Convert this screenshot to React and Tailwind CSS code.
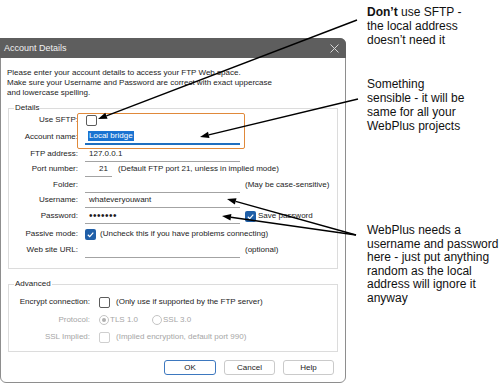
import React from "react";

const CheckBox = ({ checked, disabled }) => {
  if (checked) {
    return (
      <div className="w-[11px] h-[11px] rounded-[2px] bg-[#1f5fa8] flex items-center justify-center shrink-0">
        <svg width="9" height="9" viewBox="0 0 9 9">
          <polyline points="1.8,4.8 3.7,6.6 7.3,2.6" fill="none" stroke="#ffffff" strokeWidth="1.2" />
        </svg>
      </div>
    );
  }
  return (
    <div
      className={
        disabled
          ? "w-[11px] h-[11px] rounded-[2px] border border-[#cfcfcf] bg-white shrink-0"
          : "w-[11px] h-[11px] rounded-[2px] border border-[#5c5c5c] bg-white shrink-0"
      }
    />
  );
};

const Radio = ({ selected }) => (
  <div className="w-[10px] h-[10px] rounded-full border border-[#c4c4c4] bg-white flex items-center justify-center shrink-0">
    {selected && <div className="w-[4px] h-[4px] rounded-full bg-[#b0b0b0]" />}
  </div>
);

// baris pada grup Details
const Row = ({ label, className = "", children }) => (
  <div className={"flex h-[16px] items-center " + className}>
    <div className="w-[69px] text-right">{label}</div>
    <div className="ml-[7px] flex items-center">{children}</div>
  </div>
);

const TextBox = ({ children, width = "w-[155px]" }) => (
  <div className={width + " h-[15px] border-b border-[#a3a3a3] pl-[4px] flex items-center"}>
    {children}
  </div>
);

const AdvRow = ({ label, dim, className = "", children }) => (
  <div className={"flex h-[16px] items-center " + className}>
    <div className={dim ? "w-[81px] text-right text-[#a6a6a6]" : "w-[81px] text-right"}>{label}</div>
    <div className="ml-[9px] flex items-center">{children}</div>
  </div>
);

const Arrow = ({ x1, y1, x2, y2 }) => {
  const a = Math.atan2(y2 - y1, x2 - x1);
  const len = 9;
  const half = 3.2;
  const bx = x2 - len * Math.cos(a);
  const by = y2 - len * Math.sin(a);
  const px = -Math.sin(a) * half;
  const py = Math.cos(a) * half;
  return (
    <g>
      <line x1={x1} y1={y1} x2={bx} y2={by} stroke="#000" strokeWidth="1.4" />
      <polygon points={`${x2},${y2} ${bx + px},${by + py} ${bx - px},${by - py}`} fill="#000" />
    </g>
  );
};

const App = () => {
  return (
    <div className="relative w-[500px] h-[385px] bg-white overflow-hidden font-['Liberation_Sans',Arial,sans-serif]">
      <div className="flex">
        {/* dialog */}
        <div className="mt-[38px] w-[346px] h-[345px] border border-[#8e8e8e] rounded-tr-[6px] rounded-b-[6px] bg-white text-[8px] leading-[10px] text-[#1c1c1c] flex flex-col">
          <div className="h-[20px] -mt-px -mx-px bg-[#5e5e5e] rounded-tr-[6px] flex items-center justify-between pl-[4px] pr-[7px]">
            <span className="text-[9px] text-[#f2f2f2]">Account Details</span>
            <svg width="9" height="9" viewBox="0 0 9 9">
              <path d="M0.5 0.5 L8.5 8.5 M8.5 0.5 L0.5 8.5" stroke="#d6d6d6" strokeWidth="1" />
            </svg>
          </div>

          <div className="px-[7px] flex flex-col">
            <p className="mt-[10px] -ml-px">
              Please enter your account details to access your FTP Web space.
              <br />
              Make sure your Username and Password are correct with exact uppercase
              <br />
              and lowercase spelling.
            </p>

            <fieldset className="mt-[5px] border border-[#dcdcdc] pb-[10px]">
              <legend className="ml-[5px] px-[1px]">Details</legend>
              <Row label="Use SFTP:" className="-mt-px">
                <div className="ml-px">
                  <CheckBox />
                </div>
              </Row>
              <Row label="Account name:" className="mt-px">
                <div className="w-[155px] h-[15px] border-b-2 border-[#1f6fc0] pl-[3px] flex items-center">
                  <span className="bg-[#1a73d1] text-white px-[1px]">Local bridge</span>
                </div>
              </Row>
              <Row label="FTP address:" className="mt-px">
                <TextBox>127.0.0.1</TextBox>
              </Row>
              <Row label="Port number:" className="-mt-px">
                <div className="w-[27px] h-[15px] border-b border-[#a3a3a3] pr-[4px] flex items-center justify-end">
                  21
                </div>
                <span className="ml-[6px]">(Default FTP port 21, unless in implied mode)</span>
              </Row>
              <Row label="Folder:">
                <TextBox />
                <span className="ml-[5px]">(May be case-sensitive)</span>
              </Row>
              <Row label="Username:" className="-mt-px">
                <TextBox>whateveryouwant</TextBox>
              </Row>
              <Row label="Password:">
                <TextBox>
                  <span className="text-[10px] tracking-[0.5px]">•••••••</span>
                </TextBox>
                <div className="ml-[5px]">
                  <CheckBox checked />
                </div>
                <span className="ml-[2px]">Save password</span>
              </Row>
              <Row label="Passive mode:" className="mt-[2px]">
                <CheckBox checked />
                <span className="ml-[4px]">(Uncheck this if you have problems connecting)</span>
              </Row>
              <Row label="Web site URL:">
                <TextBox />
                <span className="ml-[5px]">(optional)</span>
              </Row>
            </fieldset>

            <fieldset className="mt-[10px] border border-[#dcdcdc] pb-[6px]">
              <legend className="ml-[5px] px-[1px]">Advanced</legend>
              <AdvRow label="Encrypt connection:" className="mt-[5px]">
                <CheckBox />
                <span className="ml-[6px]">(Only use if supported by the FTP server)</span>
              </AdvRow>
              <AdvRow label="Protocol:" dim className="mt-[2px]">
                <Radio selected />
                <span className="ml-[1px] text-[#a6a6a6]">TLS 1.0</span>
                <div className="ml-[14px]">
                  <Radio />
                </div>
                <span className="ml-[1px] text-[#a6a6a6]">SSL 3.0</span>
              </AdvRow>
              <AdvRow label="SSL Implied:" dim className="mt-px">
                <CheckBox disabled />
                <span className="ml-[6px] text-[#a6a6a6]">(Implied encryption, default port 990)</span>
              </AdvRow>
            </fieldset>

            <div className="mt-[8px] mr-[4px] flex justify-end gap-[8px]">
              <button className="w-[52px] h-[15px] rounded-[3px] border border-[#3d78bf] bg-white text-[8px] leading-none">
                OK
              </button>
              <button className="w-[51px] h-[15px] rounded-[3px] border border-[#cacaca] bg-white text-[8px] leading-none">
                Cancel
              </button>
              <button className="w-[51px] h-[15px] rounded-[3px] border border-[#cacaca] bg-white text-[8px] leading-none">
                Help
              </button>
            </div>
          </div>
        </div>

        {/* notes */}
        <div className="ml-[21px] w-[133px] text-[12px] leading-[14px] text-[#111]">
          <p className="mt-[5px]">
            <b>Don’t</b> use SFTP -
            <br />
            the local address
            <br />
            doesn’t need it
          </p>
          <p className="mt-[30px]">
            Something
            <br />
            sensible - it will be
            <br />
            same for all your
            <br />
            WebPlus projects
          </p>
          <p className="mt-[91px] leading-[13.5px]">
            WebPlus needs a
            <br />
            username and password
            <br />
            here - just put anything
            <br />
            random as the local
            <br />
            address will ignore it
            <br />
            anyway
          </p>
        </div>
      </div>

      {/* highlight box */}
      <div className="absolute left-[77px] top-[113px] w-[168px] h-[36px] border-[1.5px] border-[#e0893a] rounded-[2px] pointer-events-none" />

      <svg className="absolute inset-0 pointer-events-none" width="500" height="385">
        <Arrow x1={357} y1={20} x2={98} y2={119} />
        <Arrow x1={358} y1={99} x2={200} y2={137} />
        <Arrow x1={356} y1={235} x2={227} y2={199} />
        <Arrow x1={356} y1={235} x2={222} y2={216} />
      </svg>
    </div>
  );
};

export default App;
